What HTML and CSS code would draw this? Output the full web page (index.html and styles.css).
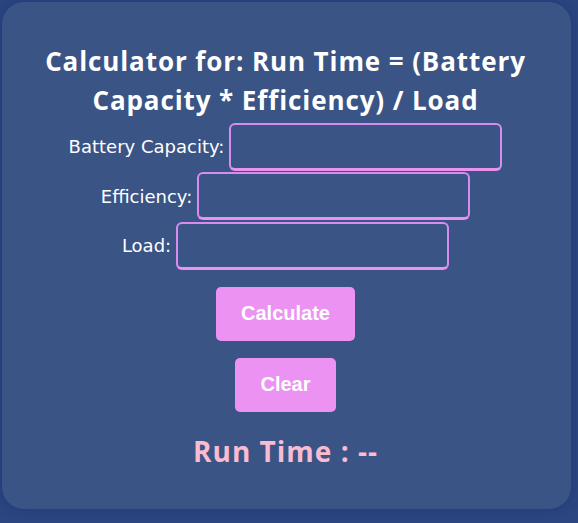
FILE: index.html
```html
<!DOCTYPE html>
<html lang="en">
<head>
<meta charset="utf-8">
<title>Run Time Calculator</title>
<link rel="stylesheet" href="styles.css">
</head>
<body>
<main class="card">
  <h1 class="title">Calculator for: Run Time = (Battery Capacity * Efficiency) / Load</h1>
  <form class="form">
    <div class="row"><label class="label" for="cap">Battery Capacity:</label><input class="field" id="cap" type="text"></div>
    <div class="row"><label class="label" for="eff">Efficiency:</label><input class="field" id="eff" type="text"></div>
    <div class="row"><label class="label" for="load">Load:</label><input class="field" id="load" type="text"></div>
    <div class="actions">
      <button class="btn" type="button">Calculate</button>
      <button class="btn" type="reset">Clear</button>
    </div>
  </form>
  <p class="result">Run Time : --</p>
</main>
</body>
</html>
```
FILE: styles.css
```css
html, body {
  margin: 0;
  height: 100%;
}
body {
  background: #2b4680;
  padding: 2px 7px 14px 2px;
  box-sizing: border-box;
  font-family: "Open Sans", "DejaVu Sans", sans-serif;
}
.card {
  background: #3a5485;
  border-radius: 22px;
  box-shadow: 0 0 10px 2px rgba(30, 55, 115, 0.55);
  height: 100%;
  box-sizing: border-box;
  padding: 40px 30px 0 28px;
  text-align: center;
}
.title {
  margin: 0;
  color: #ffffff;
  font-size: 26px;
  font-weight: 700;
  line-height: 39px;
  letter-spacing: 0.9px;
}
.form {
  display: flex;
  flex-direction: column;
  align-items: center;
  margin-top: 2px;
}
.row {
  display: flex;
  align-items: center;
  gap: 5px;
  height: 49.5px;
}
.label {
  color: #ffffff;
  font-family: "DejaVu Sans", sans-serif;
  font-size: 18px;
}
.field {
  width: 273px;
  height: 48px;
  box-sizing: border-box;
  background: transparent;
  border: 2px solid #d98cf0;
  border-bottom: 3px solid #e993ee;
  border-radius: 6px;
  color: #fff;
  font-size: 16px;
}
.actions {
  display: flex;
  flex-direction: column;
  align-items: center;
  gap: 17px;
  margin-top: 16px;
}
.btn {
  background: #ec92f3;
  color: #ffffff;
  border: none;
  border-radius: 5px;
  font-family: "Liberation Sans", Arial, sans-serif;
  font-weight: 700;
  font-size: 20px;
  padding: 0 25px;
  height: 54px;
}
.result {
  margin: 18px 0 0;
  color: #f8bbd0;
  font-size: 28px;
  font-weight: 700;
  line-height: 42px;
  letter-spacing: 1px;
}
```
